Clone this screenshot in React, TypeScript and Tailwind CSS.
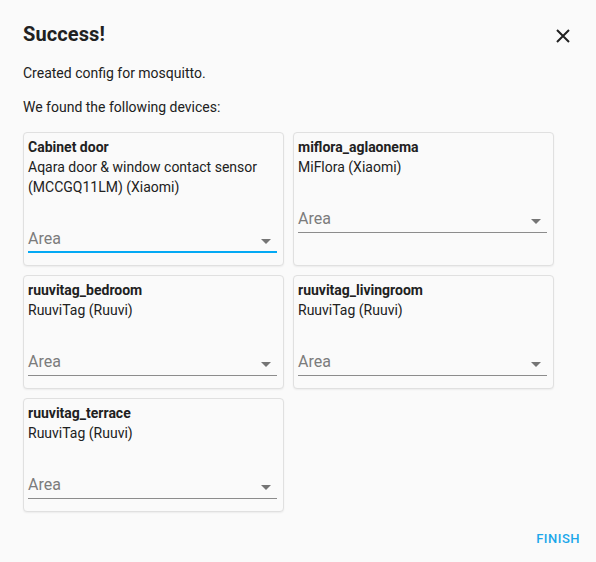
import React from "react";

type Device = { name: string; desc: string[]; focused?: boolean };

const devices: Device[] = [
  { name: "Cabinet door", desc: ["Aqara door & window contact sensor", "(MCCGQ11LM) (Xiaomi)"], focused: true },
  { name: "miflora_aglaonema", desc: ["MiFlora (Xiaomi)"] },
  { name: "ruuvitag_bedroom", desc: ["RuuviTag (Ruuvi)"] },
  { name: "ruuvitag_livingroom", desc: ["RuuviTag (Ruuvi)"] },
  { name: "ruuvitag_terrace", desc: ["RuuviTag (Ruuvi)"] },
];

function Card({ d }: { d: Device }) {
  return (
    <div className="flex flex-col border border-[#e0e0e0] rounded-[4px] bg-[#fafafa] shadow-[0_1px_2px_rgba(0,0,0,0.06)] pt-[4px] pb-[12px] pl-[4px] pr-[6px]">
      <div className="text-[14px] leading-[20px] font-bold text-[#212121]">{d.name}</div>
      {d.desc.map((l, i) => (
        <div key={i} className="text-[14px] leading-[20px] text-[#212121]">{l}</div>
      ))}
      <div
        className={
          d.focused
            ? "h-[56px] flex items-end border-b-2 border-[#03a9f4]"
            : "h-[56px] flex items-end border-b border-[#8c8c8c]"
        }
      >
        <div className={d.focused ? "flex-1 flex items-center pb-0" : "flex-1 flex items-center pb-[1px]"}>
          <span className="flex-1 text-[16px] leading-[24px] text-[#7c7c7c]">Area</span>
          <svg width="10" height="5" viewBox="0 0 10 5" className="mr-[6px] mt-[4px]">
            <polygon points="0,0 10,0 5,5" fill="#757575" />
          </svg>
        </div>
      </div>
    </div>
  );
}

export default function App() {
  return (
    <div
      className="w-[596px] h-[562px] bg-[#fafafa] text-[#212121] relative"
      style={{ fontFamily: "Roboto, 'Liberation Sans', sans-serif" }}
    >
      <div className="flex flex-col pl-[23px] pt-[18px]">
        <div className="flex items-center justify-between pr-[26px]">
          <h2 className="text-[20px] leading-[32px] font-bold tracking-[0.1px]">Success!</h2>
          <svg width="14" height="14" viewBox="0 0 14 14" className="mt-[4px]">
            <path d="M1 1 L13 13 M13 1 L1 13" stroke="#212121" strokeWidth="2" />
          </svg>
        </div>
        <p className="mt-[13px] text-[14px] leading-[20px]">Created config for mosquitto.</p>
        <p className="mt-[14px] text-[14px] leading-[20px]">We found the following devices:</p>
        <div className="mt-[15px] grid grid-cols-[261px_261px] gap-x-[9px] gap-y-[9px]">
          {devices.map((d) => (
            <Card key={d.name} d={d} />
          ))}
        </div>
        <div className="flex justify-end pr-[16px] mt-[17px]">
          <span className="text-[13px] leading-[20px] font-medium tracking-[0.5px] text-[#1aa7ea]">FINISH</span>
        </div>
      </div>
    </div>
  );
}
